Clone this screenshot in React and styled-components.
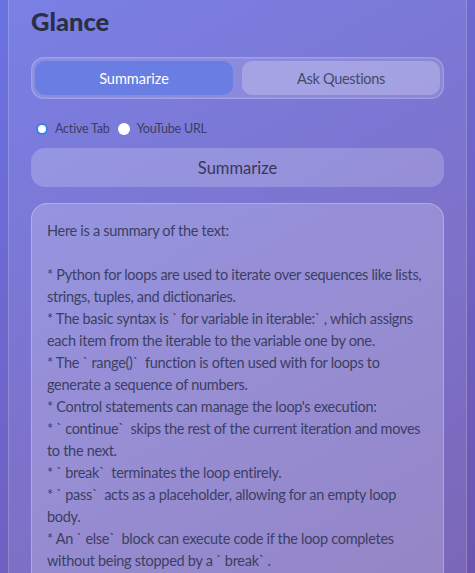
import styled, { createGlobalStyle } from 'styled-components';

const summary = `Here is a summary of the text:

* Python for loops are used to iterate over sequences like lists, strings, tuples, and dictionaries.
* The basic syntax is \` for variable in iterable:\` , which assigns each item from the iterable to the variable one by one.
* The \` range()\`  function is often used with for loops to generate a sequence of numbers.
* Control statements can manage the loop's execution:
* \` continue\`  skips the rest of the current iteration and moves to the next.
* \` break\`  terminates the loop entirely.
* \` pass\`  acts as a placeholder, allowing for an empty loop body.
* An \` else\`  block can execute code if the loop completes without being stopped by a \` break\` .`;

export default function App () {
  return (
    <>
      <GlobalStyle />
      <Panel>
        <Title>Glance</Title>
        <Tabs>
          <Tab active>Summarize</Tab>
          <Tab>Ask Questions</Tab>
        </Tabs>
        <SourceRow>
          <Option>
            <Radio checked />
            Active Tab
          </Option>
          <Option>
            <Radio />
            YouTube URL
          </Option>
        </SourceRow>
        <ActionButton>Summarize</ActionButton>
        <SummaryBox>{summary}</SummaryBox>
      </Panel>
    </>
  );
}

const GlobalStyle = createGlobalStyle`
  html, body {
    min-height: 100%;
  }

  body {
    margin: 0;
    padding: 0 8px;
    min-height: 100vh;
    background: linear-gradient(150deg, #6a72e2 0%, #6f62c4 60%, #6c56b0 100%);
    background-attachment: fixed;
    font-family: Lato, "Liberation Sans", sans-serif;
  }
`;

const Panel = styled.main`
  padding: 6px 22px 40px;
  background: rgba(255, 255, 255, 0.1);
  border: 1px solid rgba(255, 255, 255, 0.18);
  border-top: none;
  min-height: 700px;
`;

const Title = styled.h1`
  margin: 0 0 20px;
  font-size: 25.5px;
  line-height: 31px;
  font-weight: 900;
  color: #2a2f45;
`;

const Tabs = styled.div`
  display: grid;
  grid-template-columns: 1fr 1fr;
  gap: 9px;
  padding: 4px;
  border-radius: 13px;
  background: rgba(255, 255, 255, 0.12);
  box-shadow: inset 0 0 0 1.5px rgba(255, 255, 255, 0.18);
`;

const Tab = styled.button`
  height: 34px;
  border: none;
  border-radius: 10px;
  font-family: inherit;
  font-size: 14.5px;
  letter-spacing: ${p => (p.active ? '0' : '-0.3px')};
  background: ${p => (p.active ? '#6a7de2' : 'rgba(255, 255, 255, 0.22)')};
  color: ${p => (p.active ? '#ffffff' : '#454a6c')};
`;

const SourceRow = styled.div`
  display: flex;
  align-items: center;
  gap: 8px;
  margin: 22px 0 0 5px;
`;

const Option = styled.label`
  display: flex;
  align-items: center;
  gap: 7px;
  font-size: 12.5px;
  letter-spacing: -0.2px;
  color: #3a3e64;
`;

const Radio = styled.span`
  width: 12px;
  height: 12px;
  box-sizing: border-box;
  border-radius: 50%;
  background: #ffffff;
  border: ${p => (p.checked ? '2.5px solid #3b7ff0' : 'none')};
`;

const ActionButton = styled.button`
  display: block;
  width: 100%;
  height: 39px;
  margin-top: 12px;
  border: none;
  border-radius: 14px;
  background: rgba(255, 255, 255, 0.2);
  font-family: inherit;
  font-size: 16.5px;
  color: #353957;
`;

const SummaryBox = styled.div`
  margin-top: 16px;
  padding: 16px 15px 20px;
  border-radius: 16px;
  background: rgba(255, 255, 255, 0.2);
  border: 1px solid rgba(255, 255, 255, 0.25);
  white-space: pre-wrap;
  font-size: 14.5px;
  letter-spacing: -0.3px;
  line-height: 22px;
  color: #3b3f62;
`;
